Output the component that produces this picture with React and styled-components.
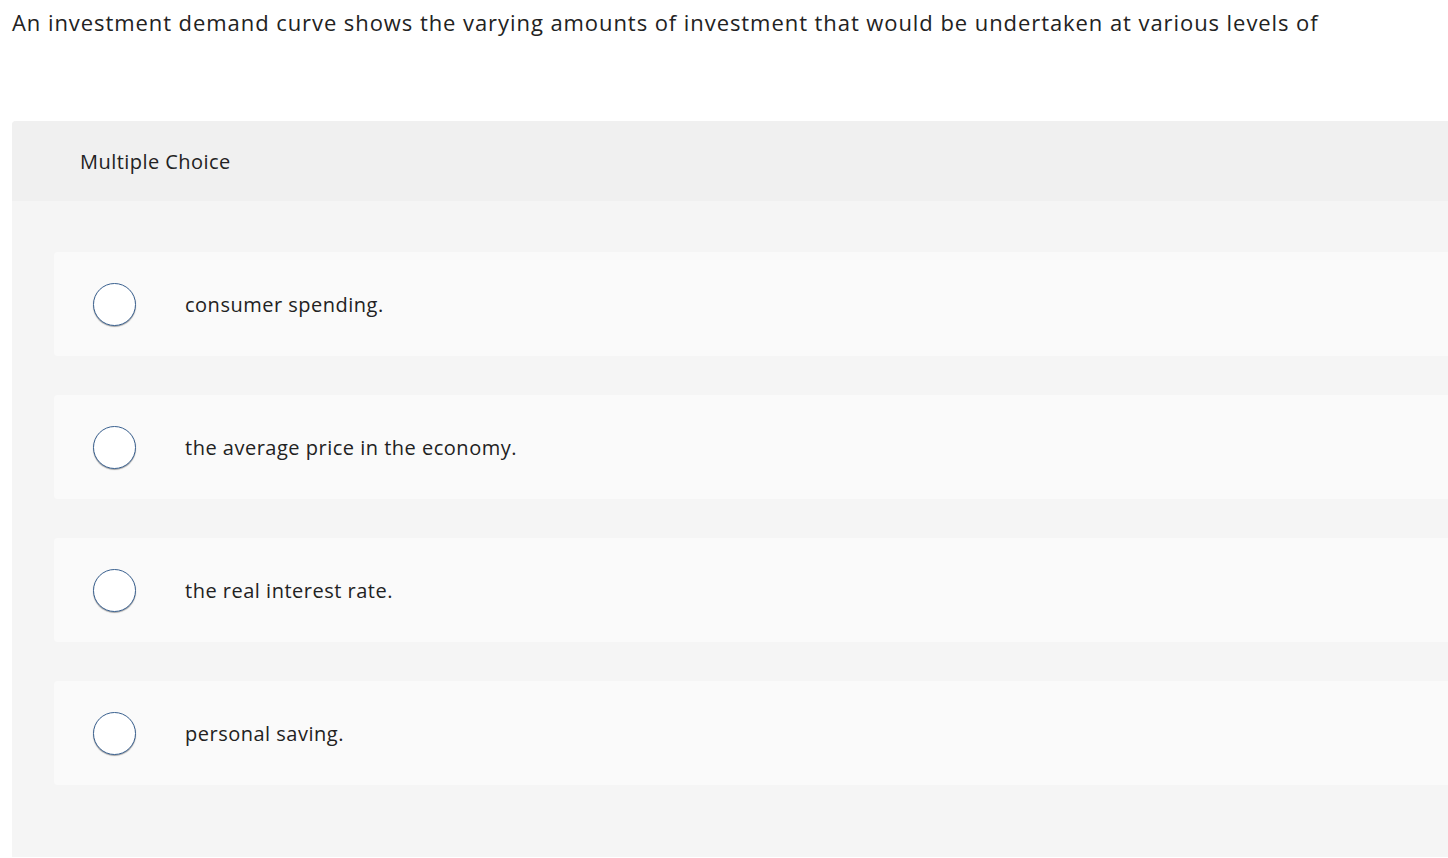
import React from 'react';
import styled, { createGlobalStyle } from 'styled-components';

const GlobalStyle = createGlobalStyle`
  html, body {
    margin: 0;
    padding: 0;
    background: #ffffff;
    overflow: hidden;
  }
  body {
    font-family: "Open Sans", Lato, sans-serif;
    color: #222222;
  }
`

const Page = styled.div`
  padding: 7px 0 0 12px;
`

const Question = styled.p`
  margin: 0;
  font-size: 22px;
  line-height: 30px;
  letter-spacing: 0.93px;
  color: #222222;
  white-space: nowrap;
`

const Panel = styled.div`
  margin-top: 84px;
  width: 1460px;
  border-radius: 4px 0 0 0;
  overflow: hidden;
  background: #f5f5f5;
`

const PanelHeader = styled.div`
  height: 80px;
  display: flex;
  align-items: center;
  padding-left: 68px;
  background: #f0f0f0;
  font-size: 20px;
  letter-spacing: 0.45px;
`

const Options = styled.div`
  display: flex;
  flex-direction: column;
  gap: 39px;
  padding: 51px 0 72px 42px;
`

const Option = styled.label`
  height: 104px;
  display: flex;
  align-items: center;
  background: #fafafa;
  border-radius: 4px 0 0 4px;
  padding-left: 39px;
  cursor: pointer;
`

const Radio = styled.span`
  width: 41px;
  height: 41px;
  flex: none;
  border-radius: 50%;
  background: #ffffff;
  border: 1.5px solid #3a6190;
  box-shadow: 0 1px 1px rgba(0, 0, 0, 0.35);
`

const OptionText = styled.span`
  margin-left: 49px;
  font-size: 20px;
  letter-spacing: 0.5px;
  color: #222222;
`

const choices = [
  'consumer spending.',
  'the average price in the economy.',
  'the real interest rate.',
  'personal saving.',
];

const App = () => {
  return (
    <>
      <GlobalStyle />
      <Page>
        <Question>
          An investment demand curve shows the varying amounts of investment that would be undertaken at various levels of
        </Question>
        <Panel>
          <PanelHeader>Multiple Choice</PanelHeader>
          <Options>
            {choices.map((c) => (
              <Option key={c}>
                <Radio />
                <OptionText>{c}</OptionText>
              </Option>
            ))}
          </Options>
        </Panel>
      </Page>
    </>
  );
}

export default App;
